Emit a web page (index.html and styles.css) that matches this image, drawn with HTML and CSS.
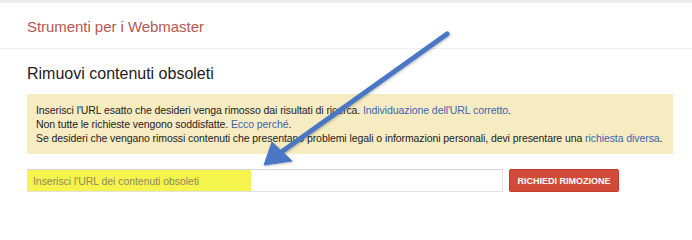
FILE: index.html
```html
<!DOCTYPE html>
<html lang="it">
<head>
<meta charset="utf-8">
<title>Rimuovi contenuti obsoleti</title>
<link rel="stylesheet" href="styles.css">
</head>
<body>
<div class="page">
  <div class="topband"></div>
  <header class="header">
    <span class="brand">Strumenti per i Webmaster</span>
  </header>
  <main class="content">
    <h1 class="title">Rimuovi contenuti obsoleti</h1>
    <div class="notice">
      <p>Inserisci l'URL esatto che desideri venga rimosso dai risultati di ricerca. <a href="#">Individuazione dell'URL corretto</a>.</p>
      <p>Non tutte le richieste vengono soddisfatte. <a href="#">Ecco perché</a>.</p>
      <p>Se desideri che vengano rimossi contenuti che presentano problemi legali o informazioni personali, devi presentare una <a href="#">richiesta diversa</a>.</p>
    </div>
    <form class="form">
      <div class="field">
        <span class="highlight"></span>
        <input class="url" type="text" placeholder="Inserisci l'URL dei contenuti obsoleti">
      </div>
      <button class="btn" type="button">RICHIEDI RIMOZIONE</button>
    </form>
  </main>
  <svg class="arrow" width="692" height="213" viewBox="0 0 692 213">
    <defs>
      <filter id="sh" x="-10%" y="-10%" width="120%" height="120%">
        <feDropShadow dx="1" dy="1" stdDeviation="1" flood-color="#000" flood-opacity="0.25"/>
      </filter>
    </defs>
    <g filter="url(#sh)" fill="#4a76c5" stroke="#4a76c5">
      <line x1="447" y1="34" x2="280" y2="153" stroke-width="5" stroke-linecap="round"/>
      <polygon points="264,165 272,142 292,161" stroke-width="1" stroke-linejoin="round"/>
    </g>
  </svg>
</div>
</body>
</html>
```

FILE: styles.css
```css
* { box-sizing: border-box; }
html, body { margin: 0; padding: 0; background: #fff; }
body {
  font-family: "Liberation Sans", Arial, sans-serif;
  color: #222;
  width: 692px;
  height: 213px;
  overflow: hidden;
}
.page { position: relative; width: 692px; height: 213px; }
.topband { height: 3px; background: #ececec; }
.header {
  height: 46px;
  display: flex;
  align-items: center;
  padding-left: 27px;
  border-bottom: 1px solid #eeeeee;
}
.brand {
  font-size: 15px;
  color: #b5584f;
  padding-top: 2px;
  letter-spacing: -0.05px;
}
.content { padding: 0 20px 0 27px; }
.title {
  margin: 0;
  font-weight: normal;
  font-size: 16px;
  color: #222;
  line-height: 20px;
  padding-top: 15px;
  height: 45px;
}
.notice {
  width: 646px;
  background: #f7ebc2;
  padding: 9px 9px;
  font-size: 10.5px;
  letter-spacing: -0.08px;
  line-height: 14px;
  color: #222;
}
.notice p { margin: 0; white-space: nowrap; }
.notice a { color: #3b63b0; text-decoration: none; }
.form {
  display: flex;
  align-items: center;
  gap: 6px;
  margin-top: 15px;
}
.field {
  position: relative;
  width: 476px;
  height: 23px;
}
.url {
  width: 100%;
  height: 100%;
  border: 1px solid #e2e2e2;
  border-top-color: #d6d6d6;
  background: transparent;
  font-family: "Liberation Sans", Arial, sans-serif;
  font-size: 10.5px;
  letter-spacing: -0.05px;
  padding: 0 0 0 5px;
  position: relative;
  outline: none;
}
.url::placeholder { color: #8f8a5a; }
.highlight {
  position: absolute;
  left: 0;
  top: 0;
  width: 224px;
  height: 23px;
  background: #f4f44c;
}
.btn {
  width: 110px;
  height: 23px;
  background: #d14a3a;
  color: #fff;
  border: 1px solid #c0392b;
  border-radius: 2px;
  font-family: "Liberation Sans", Arial, sans-serif;
  font-weight: bold;
  font-size: 9px;
  padding: 0;
}
.arrow { position: absolute; left: 0; top: 0; pointer-events: none; }
```
